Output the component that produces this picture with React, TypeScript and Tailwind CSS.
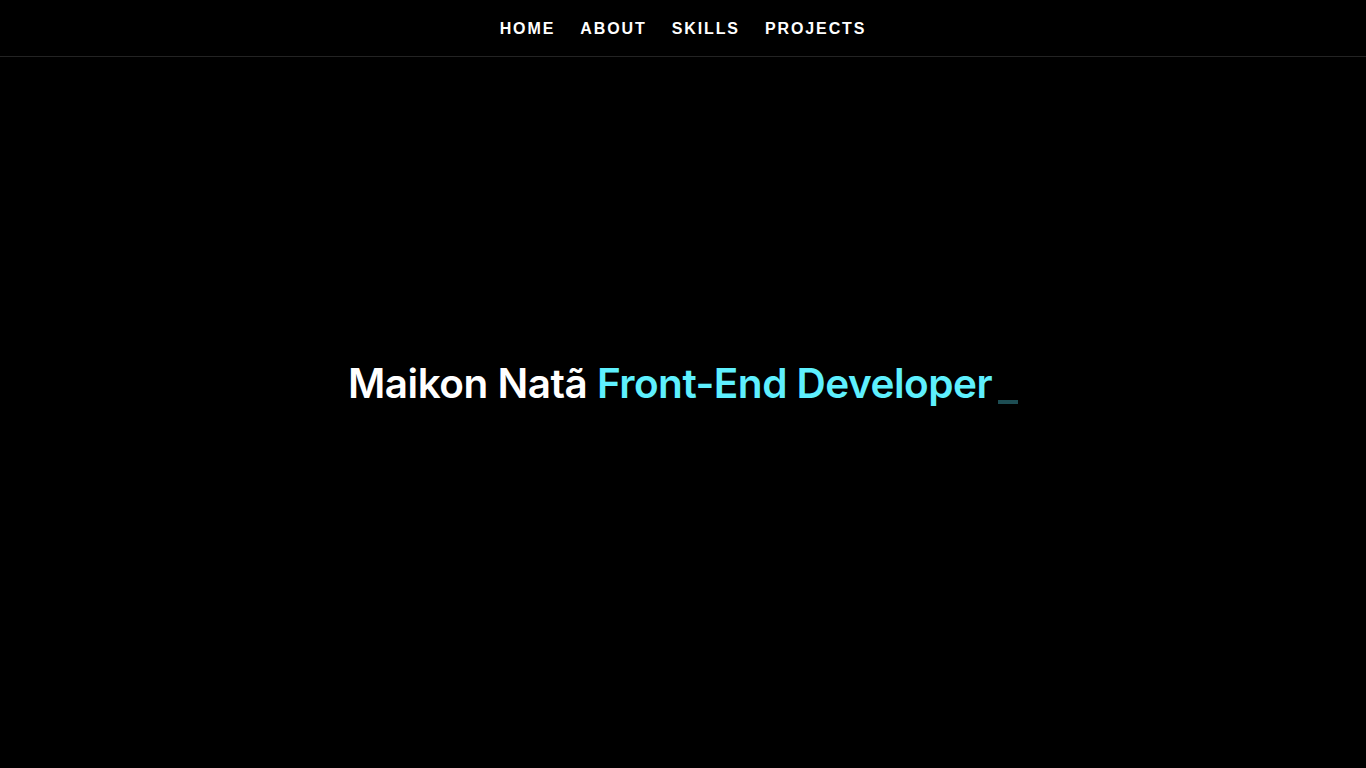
export default function App() {
  const links = ["HOME", "ABOUT", "SKILLS", "PROJECTS"];

  return (
    <div className="min-h-screen bg-black text-white flex flex-col">
      {/* --- Top Nav --- */}
      <nav className="h-[57px] border-b border-[#232323] flex items-center justify-center">
        <ul
          className="flex gap-[25px] pt-[1px] text-[16px] font-bold tracking-[1.9px]"
          style={{ fontFamily: '"Liberation Sans", Arial, sans-serif' }}
        >
          {links.map((link) => (
            <li key={link}>
              <a href={`#${link.toLowerCase()}`}>{link}</a>
            </li>
          ))}
        </ul>
      </nav>

      {/* --- Hero --- */}
      <main className="flex-1 flex items-center justify-center pb-[56px] h-[711px]">
        <h1
          className="text-[40.5px] font-semibold tracking-[-0.5px] flex items-baseline"
          style={{ fontFamily: '"Inter", "Noto Sans", sans-serif' }}
        >
          <span>Maikon Natã&nbsp;</span>
          <span className="text-[#5ef0fe]">Front-End Developer</span>
          {/* blinking cursor, caught mid-fade */}
          <span className="ml-[6px] inline-block w-[20px] h-[4px] bg-[#1d4d53] translate-y-[6px]"></span>
        </h1>
      </main>
    </div>
  );
}
